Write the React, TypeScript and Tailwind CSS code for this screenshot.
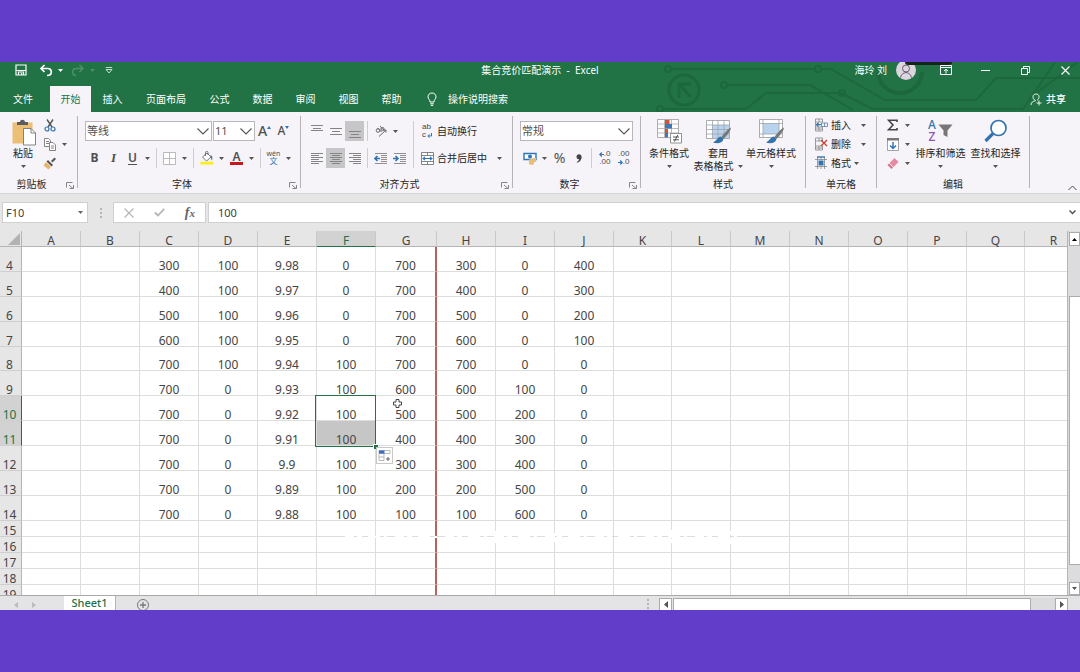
import React from 'react';
import { clsx } from 'clsx';

const TABS = ['插入', '页面布局', '公式', '数据', '审阅', '视图', '帮助'];

const COLUMNS = [
  { name: 'A', width: 59 },
  { name: 'B', width: 59 },
  { name: 'C', width: 59 },
  { name: 'D', width: 59 },
  { name: 'E', width: 59 },
  { name: 'F', width: 59 },
  { name: 'G', width: 61 },
  { name: 'H', width: 59 },
  { name: 'I', width: 59 },
  { name: 'J', width: 59 },
  { name: 'K', width: 58 },
  { name: 'L', width: 59 },
  { name: 'M', width: 59 },
  { name: 'N', width: 59 },
  { name: 'O', width: 59 },
  { name: 'P', width: 59 },
  { name: 'Q', width: 58 },
  { name: 'R', width: 58 },
];

// 行号 -> C 到 J 列的值
const DATA: Record<number, string[]> = {
  4: ['300', '100', '9.98', '0', '700', '300', '0', '400'],
  5: ['400', '100', '9.97', '0', '700', '400', '0', '300'],
  6: ['500', '100', '9.96', '0', '700', '500', '0', '200'],
  7: ['600', '100', '9.95', '0', '700', '600', '0', '100'],
  8: ['700', '100', '9.94', '100', '700', '700', '0', '0'],
  9: ['700', '0', '9.93', '100', '600', '600', '100', '0'],
  10: ['700', '0', '9.92', '100', '500', '500', '200', '0'],
  11: ['700', '0', '9.91', '100', '400', '400', '300', '0'],
  12: ['700', '0', '9.9', '100', '300', '300', '400', '0'],
  13: ['700', '0', '9.89', '100', '200', '200', '500', '0'],
  14: ['700', '0', '9.88', '100', '100', '100', '600', '0'],
};

const ROWS = Array.from({ length: 16 }, (_, i) => i + 4);

const Caret = ({ className = 'text-[#555]' }: { className?: string }) => (
  <svg viewBox="0 0 5 3" className={clsx('h-[3px] w-[5px] shrink-0', className)}>
    <path d="M0 0h5L2.5 3z" fill="currentColor" />
  </svg>
);

const CaretButton = ({ label }: { label: string }) => (
  <button aria-label={label} className="flex h-5 w-[11px] shrink-0 items-center justify-center">
    <Caret />
  </button>
);

const Sep = () => (
  <div className="flex h-5 w-[7px] shrink-0 justify-center">
    <div className="w-px bg-[#cfcdd2]" />
  </div>
);

const Tool = ({ label, active, children }: { label: string; active?: boolean; children: React.ReactNode }) => (
  <button
    aria-label={label}
    className={clsx('flex h-5 w-[19px] shrink-0 items-center justify-center text-[#505050]', active && 'bg-[#c6c5c8]')}
  >
    {children}
  </button>
);

const Chevron = () => (
  <svg viewBox="0 0 12 7" className="pointer-events-none absolute right-[3px] top-[7px] h-[7px] w-3" fill="none" stroke="#555" strokeWidth="1.1">
    <path d="M0.5 0.5L6 6L11.5 0.5" />
  </svg>
);

const Combo = ({ label, value, className }: { label: string; value: string; className: string }) => (
  <div className={clsx('relative h-5', className)}>
    <select
      aria-label={label}
      defaultValue={value}
      className="h-5 w-full appearance-none rounded-none border border-[#b9b7bb] bg-white pl-px text-[11px] leading-[14px] text-[#505050]"
    >
      <option>{value}</option>
    </select>
    <Chevron />
  </div>
);

const Group = ({ label, launcher, className, children }: { label: string; launcher?: boolean; className: string; children: React.ReactNode }) => (
  <>
    <section aria-label={label} className={clsx('flex h-[75px] shrink-0 flex-col', className)}>
      <div className="min-h-0 flex-1">{children}</div>
      <div className="flex h-[14px] items-center">
        <span className="flex-1 text-center">{label}</span>
        {launcher && (
          <button aria-label={`${label}设置`} className="flex w-[14px] items-end justify-center pt-px">
            <svg viewBox="0 0 8 8" className="h-2 w-2" fill="none" stroke="#777" strokeWidth="0.9">
              <path d="M0.5 6.5V1.5H6.5M3 4L7 7.5M7.5 4V7.5H3.5" />
            </svg>
          </button>
        )}
      </div>
    </section>
    <div className="h-[72px] w-px shrink-0 bg-[#b5b3b7]" />
  </>
);

const BigButton = ({ icon, lines, className }: { icon: React.ReactNode; lines: string[]; className: string }) => (
  <button className={clsx('flex shrink-0 flex-col items-center whitespace-nowrap pt-0.5', className)}>
    <span className="flex h-[26px] items-center">{icon}</span>
    <span className="mt-[3px] leading-[13px]">{lines[0]}</span>
    <span className="flex h-[13px] items-center gap-1 leading-[13px]">
      {lines[1]}
      <Caret />
    </span>
  </button>
);

const AlignIcon = ({ d }: { d: string }) => (
  <svg viewBox="0 0 12 13" className="h-[13px] w-3" fill="none" stroke="#858585" strokeWidth="1">
    <path d={d} />
  </svg>
);

const IndentIcon = ({ arrow }: { arrow: string }) => (
  <svg viewBox="0 0 13 13" className="h-[13px] w-[13px]" fill="none" stroke="#858585">
    <path d="M1 1.5H13M7 3.5H13M7 5.5H13M7 7.5H13M7 9.5H13M1 11.5H13" strokeWidth="0.9" />
    <path d={arrow} stroke="#2f74b5" strokeWidth="1.6" />
  </svg>
);

const ConditionalIcon = () => (
  <svg viewBox="0 0 26 26" className="h-[26px] w-[26px]">
    <path d="M1.5 1.5H22.5V19.5H1.5z" fill="#fff" stroke="#999" strokeWidth="0.8" />
    <path d="M1.5 6H22.5M1.5 10.5H22.5M1.5 15H22.5M8.5 1.5V19.5M15.5 1.5V19.5" stroke="#aaa" strokeWidth="0.8" fill="none" />
    <path d="M9 2H13.5V6H9zM9 11H12V15H9z" fill="#d2552f" />
    <path d="M9 6H16V10.5H9zM9 15H12V19.5H9z" fill="#3e78b5" />
    <path d="M14.5 15.5H25.5V25H14.5z" fill="#fff" stroke="#777" strokeWidth="0.8" />
    <path d="M17 19H23M17 21.8H23M21.8 17L18.4 23.6" stroke="#444" strokeWidth="0.9" />
  </svg>
);

const BrushOver = () => (
  <>
    <path d="M25.5 9.5C22 12 18.5 16 16.5 19L18.5 21C21.5 18 24.5 14 25.8 11z" fill="#777" />
    <path d="M16 18.5C13 18.5 12.5 22 8 24.5C12 26 17.5 25.5 18.5 21z" fill="#3474ae" />
  </>
);

const TableFormatIcon = () => (
  <svg viewBox="0 0 26 26" className="h-[26px] w-[26px]">
    <path d="M1.5 2.5H24.5V20.5H1.5z" fill="#fff" stroke="#999" strokeWidth="0.8" />
    <path d="M7.5 7H24V20H7.5z" fill="#b9d3ee" />
    <path d="M1.5 7H24.5M1.5 11.5H24.5M1.5 16H24.5M7.5 2.5V20.5M13 2.5V20.5M19 2.5V20.5" stroke="#9aa3ab" strokeWidth="0.8" fill="none" />
    <BrushOver />
  </svg>
);

const CellStyleIcon = () => (
  <svg viewBox="0 0 26 26" className="h-[26px] w-[26px]">
    <path d="M1.5 1.5H24.5V19.5H1.5z" fill="#fff" stroke="#999" strokeWidth="0.8" />
    <path d="M5 5.5H21V16H5z" fill="#b9d3ee" />
    <path d="M1.5 5.5H24.5M1.5 16H24.5M5 1.5V19.5M21 1.5V19.5" stroke="#9aa3ab" strokeWidth="0.8" fill="none" />
    <BrushOver />
  </svg>
);

const CellIcon = ({ kind }: { kind: 'insert' | 'delete' | 'format' }) => (
  <svg viewBox="0 0 14 14" className="h-[14px] w-[14px]" fill="none" strokeWidth="0.8">
    {kind === 'format' ? (
      <>
        <path d="M1 3.5H13M1 10.5H13M3.5 1V13M10.5 1V13M7 1V3M7 11V13" stroke="#858585" />
        <path d="M4.5 4.5H9.5V9.5H4.5z" fill="#3474ae" />
        <path d="M3 1H11" stroke="#3474ae" strokeWidth="1.4" />
      </>
    ) : (
      <>
        <path d="M1.5 1H8.5V4H1.5zM5 1V4M1.5 9H8.5V13H1.5zM1.5 11H8.5M5 9V13M1.5 4V9" stroke="#858585" />
        {kind === 'insert' ? (
          <>
            <path d="M7.5 5H13.5V8.5H7.5zM10.5 5V8.5" stroke="#5a7fa8" />
            <path d="M7 6.7H2.5M4.5 4.8L2.5 6.7L4.5 8.6" stroke="#3474ae" strokeWidth="1.3" />
          </>
        ) : (
          <path d="M7 3L13 9M13 3L7 9" stroke="#d03b2c" strokeWidth="1.3" />
        )}
      </>
    )}
  </svg>
);

const TitleBar = () => (
  <div className="relative mb-2 flex h-4 items-center">
    <div className="flex flex-1 items-center">
      <button aria-label="保存" className="ml-[15px] flex w-3 justify-center">
        <svg viewBox="0 0 12 12" className="h-3 w-3" fill="none" stroke="#fff" strokeWidth="1.2">
          <path d="M1 1H11V11H1zM1 6.5H11M3.5 11V8H8.5V11M6.5 9V11" />
        </svg>
      </button>
      <button aria-label="撤消" className="ml-3 flex w-[14px] justify-center">
        <svg viewBox="0 0 14 13" className="h-[13px] w-[14px]" fill="none" stroke="#fff" strokeWidth="1.7">
          <path d="M5.5 1L2 4.5L5.5 8M2 4.5H8.5C11 4.5 12.3 6 12.3 8C12.3 10 10.8 11.5 8 11.5" />
        </svg>
      </button>
      <button aria-label="撤消列表" className="ml-1 flex w-[6px] justify-center"><Caret className="text-white" /></button>
      <button aria-label="恢复" disabled className="ml-2 flex w-[14px] justify-center">
        <svg viewBox="0 0 14 13" className="h-[13px] w-[14px]" fill="none" stroke="#4d9169" strokeWidth="1.4">
          <path d="M8.5 1L12 4.5L8.5 8M12 4.5H5.5C3 4.5 1.7 6 1.7 8C1.7 10 3.2 11.5 5 11.5" />
        </svg>
      </button>
      <button aria-label="恢复列表" disabled className="ml-1 flex w-[6px] justify-center"><Caret className="text-[#4d9169]" /></button>
      <button aria-label="自定义快速访问工具栏" className="ml-[10px] flex w-2 justify-center">
        <svg viewBox="0 0 8 7" className="h-[7px] w-2" fill="none" stroke="#d5e6dc" strokeWidth="0.9">
          <path d="M0.8 0.5H7.2M1 2.5H7L4 6z" />
        </svg>
      </button>
    </div>
    <h1 className="whitespace-pre text-[10px]">集合竞价匹配演示  -  Excel</h1>
    <div className="flex flex-1 items-center justify-end">
      <span>海玲 刘</span>
      <button aria-label="账户" className="ml-[9px] flex h-5 w-5 items-end justify-center overflow-hidden rounded-full bg-[#dcd6de]">
        <svg viewBox="0 0 14 16" className="h-4 w-[14px]" fill="none" stroke="#6b5a70" strokeWidth="1">
          <circle cx="7" cy="4.5" r="3.5" />
          <path d="M1.5 15C1.5 6.5 12.5 6.5 12.5 15" />
        </svg>
      </button>
      <button aria-label="功能区显示选项" className="flex w-[59px] justify-center">
        <svg viewBox="0 0 12 10" className="h-[10px] w-3" fill="none" stroke="#fff" strokeWidth="1">
          <path d="M0.5 0.5H11.5V9.5H0.5zM0.5 2.5H11.5M6 8.5V4.5M4 6L6 4.2L8 6" />
        </svg>
      </button>
      <button aria-label="最小化" className="flex w-5 justify-center">
        <svg viewBox="0 0 9 9" className="h-[9px] w-[9px]" stroke="#fff"><path d="M0 4.5H9" /></svg>
      </button>
      <button aria-label="还原" className="ml-5 flex w-5 justify-center">
        <svg viewBox="0 0 9 9" className="h-[9px] w-[9px]" fill="none" stroke="#fff">
          <path d="M0.5 2.5H6.5V8.5H0.5zM2.5 2.5V0.5H8.5V6.5H6.5" />
        </svg>
      </button>
      <button aria-label="关闭" className="ml-5 mr-[5px] flex w-5 justify-center">
        <svg viewBox="0 0 9 9" className="h-[9px] w-[9px]" stroke="#fff" strokeWidth="1.1"><path d="M0.5 0.5L8.5 8.5M8.5 0.5L0.5 8.5" /></svg>
      </button>
    </div>
    <div className="absolute right-32 top-0 h-[3px] w-[47px] rounded-b-sm bg-[#14261c]" />
  </div>
);

const Circuit = () => (
  <svg viewBox="0 0 430 50" className="pointer-events-none absolute right-0 top-0 h-[50px] w-[430px]" fill="none" stroke="#1d673d" strokeWidth="2">
    <circle cx="18" cy="7" r="3" />
    <circle cx="168" cy="7" r="3" />
    <path d="M21 7H165M171 7H181L235 38H326L346 16H430" />
    <circle cx="34" cy="28" r="15" strokeWidth="3" />
    <path d="M29 36V22H41M29 22L41 35" strokeWidth="3" />
    <circle cx="74" cy="23" r="3" />
    <path d="M77 23H160L203 48" />
    <circle cx="10" cy="47" r="3" />
    <path d="M13 47H96L116 31H191L223 47H373L405 0M385 32L428 0" />
    <circle cx="192" cy="31" r="3" />
    <path d="M228 10C230 38 270 38 272 10" strokeWidth="4" />
  </svg>
);

const RibbonTabs = () => (
  <nav className="relative flex h-[26px] items-center text-[10px]">
    <button className="mr-1 h-full w-[46px]">文件</button>
    <button className="h-full w-[41px] bg-[#f6f4f8] text-[#217346]">开始</button>
    {TABS.map((tab) => (
      <button key={tab} className={clsx('h-full', tab.length > 2 ? 'w-16' : 'w-[43px]')}>
        {tab}
      </button>
    ))}
    <label htmlFor="tell-me" className="ml-[13px] flex w-3 justify-center">
      <svg viewBox="0 0 10 14" className="h-[14px] w-[10px]" fill="none" stroke="#fff" strokeWidth="1">
        <path d="M3 10C3 7.5 1 7 1 4.8C1 2.5 2.8 1 5 1C7.2 1 9 2.5 9 4.8C9 7 7 7.5 7 10zM3.2 11.8H6.8M3.8 13.4H6.2" />
      </svg>
    </label>
    <input id="tell-me" placeholder="操作说明搜索" className="ml-[10px] w-24 bg-transparent placeholder:text-white placeholder:opacity-100" />
    <button className="ml-auto mr-[14px] flex items-center gap-1 font-medium">
      <svg viewBox="0 0 12 13" className="h-[13px] w-3" fill="none" stroke="#fff" strokeWidth="0.9">
        <path d="M5.5 7.5C3.5 6.5 3 5 3 3.8C3 2 4.3 1 6 1C7.7 1 9 2 9 3.8C9 5 8.3 6.5 7 7.5M1 12C1 9.5 3 8 5.5 7.8M9 7.5V12.5M6.5 10H11.5" />
      </svg>
      共享
    </button>
  </nav>
);

const Ribbon = () => (
  <div className="relative flex border-b border-[#d3d2d5] bg-[#f6f4f8] pb-0.5 pt-1 text-[10px] leading-[14px] text-[#262626]">
    <Group label="剪贴板" launcher className="w-[77px]">
      <div className="flex">
        <button className="ml-[10px] flex w-[26px] flex-col items-center pt-[3px]">
          <svg viewBox="0 0 26 27" className="h-[27px] w-[26px]">
            <path d="M2.5 3.5H22.5V24.5H2.5z" fill="#ebbf76" />
            <path d="M7 6V3H10C10 0 15 0 15 3H18V6z" fill="#5c5c5f" />
            <path d="M13.5 9.5H21L25.5 14V26H13.5z" fill="#fff" stroke="#777" strokeWidth="0.9" />
            <path d="M21 9.5V14H25.5" fill="none" stroke="#777" strokeWidth="0.9" />
          </svg>
          <span className="mt-px leading-[13px]">粘贴</span>
          <span className="flex h-[13px] items-center"><Caret /></span>
        </button>
        <div className="flex w-[29px] flex-col gap-px pl-1">
          <button aria-label="剪切" className="flex h-[18px] w-[19px] items-center justify-center">
            <svg viewBox="0 0 12 13" className="h-[13px] w-3" fill="none">
              <path d="M3 0.5L8 8M9 0.5L4 8" stroke="#555" strokeWidth="1.4" />
              <circle cx="3" cy="10" r="2" stroke="#3474ae" strokeWidth="1.2" />
              <circle cx="9" cy="10" r="2" stroke="#3474ae" strokeWidth="1.2" />
            </svg>
          </button>
          <div className="flex h-[18px] items-center">
            <button aria-label="复制" className="flex w-[19px] shrink-0 justify-center">
              <svg viewBox="0 0 12 13" className="h-[13px] w-3" fill="#fff" stroke="#777" strokeWidth="0.9">
                <path d="M0.5 0.5H4.5L6.5 2.5V8.5H0.5zM2 3.5H5M2 5.5H5" />
                <path d="M5.5 4.5H9L11.5 7V12.5H5.5zM7 8H10M7 10H10" />
              </svg>
            </button>
            <CaretButton label="复制选项" />
          </div>
          <button aria-label="格式刷" className="flex h-[18px] w-[19px] items-center justify-center">
            <svg viewBox="0 0 13 13" className="h-[13px] w-[13px]">
              <path d="M8 4L11.5 0.5L13 2L9.5 5.5z" fill="#555" />
              <path d="M5 3L10 8L8.5 9.5L3.5 4.5z" fill="#5c5450" />
              <path d="M3 5L8 10L5.5 12.5L0.5 8.5z" fill="#e3b76d" />
            </svg>
          </button>
        </div>
      </div>
    </Group>

    <Group label="字体" launcher className="w-[222px]">
      <div className="flex flex-col gap-[7px] pl-[7px] pt-[5px]">
        <div className="flex">
          <Combo label="字体名称" value="等线" className="mr-px w-[127px]" />
          <Combo label="字号" value="11" className="w-[42px]" />
          <Tool label="增大字号">
            <span className="text-[14px] font-medium">A</span>
            <svg viewBox="0 0 4 3" className="mb-2 h-[3px] w-1"><path d="M0 3L2 0L4 3z" fill="#2f74b5" /></svg>
          </Tool>
          <Tool label="减小字号">
            <span className="text-[12px] font-medium">A</span>
            <svg viewBox="0 0 4 3" className="mb-2 h-[3px] w-1"><path d="M0 0H4L2 3z" fill="#2f74b5" /></svg>
          </Tool>
        </div>
        <div className="flex">
          <Tool label="加粗"><span className="text-[12px] font-bold">B</span></Tool>
          <Tool label="倾斜"><span className="font-['Liberation_Serif'] text-[13px] font-bold italic">I</span></Tool>
          <Tool label="下划线"><span className="text-[12px] font-semibold underline underline-offset-2">U</span></Tool>
          <CaretButton label="下划线选项" />
          <Sep />
          <Tool label="边框">
            <svg viewBox="0 0 13 13" className="h-[13px] w-[13px]" fill="#fff" stroke="#aaa" strokeWidth="0.8">
              <path d="M0.5 0.5H12.5V12.5H0.5zM6.5 0.5V12.5M0.5 6.5H12.5" />
            </svg>
          </Tool>
          <CaretButton label="边框选项" />
          <Sep />
          <Tool label="填充颜色">
            <svg viewBox="0 0 14 14" className="h-[14px] w-[14px]">
              <path d="M2.5 6L7 2L11 6L6.5 10z" fill="#fff" stroke="#666" strokeWidth="0.9" />
              <path d="M5.5 5V1.5C5.5 0 8 0 8 1.5V4" fill="none" stroke="#666" strokeWidth="0.9" />
              <path d="M10.5 4C13 5 12.5 8 12 9.5C11 8.5 11 6.5 10.5 4z" fill="#3474ae" />
              <path d="M0.5 10.8H13.5V13.6H0.5z" fill="#f7f01c" />
            </svg>
          </Tool>
          <CaretButton label="填充颜色选项" />
          <Tool label="字体颜色">
            <span className="flex flex-col items-center">
              <span className="text-[12px] font-semibold leading-[11px]">A</span>
              <span className="h-[3px] w-[13px] bg-[#c8161d]" />
            </span>
          </Tool>
          <CaretButton label="字体颜色选项" />
          <Sep />
          <Tool label="拼音">
            <span className="flex flex-col items-center">
              <span className="text-[7px] leading-[6px]">wén</span>
              <span className="text-[8px] leading-[8px] text-[#2f74b5]">文</span>
            </span>
          </Tool>
          <CaretButton label="拼音选项" />
        </div>
      </div>
    </Group>

    <Group label="对齐方式" launcher className="w-[211px]">
      <div className="flex pl-[6px] pt-[5px]">
        <div className="flex w-[102px] flex-col gap-[7px]">
          <div className="flex">
            <Tool label="顶端对齐"><AlignIcon d="M0 0.5H12M2 3.5H10M0 5.5H12" /></Tool>
            <Tool label="垂直居中"><AlignIcon d="M0 3.5H12M2 6.5H10M0 9.5H12" /></Tool>
            <Tool label="底端对齐" active><AlignIcon d="M0 6.5H12M2 9.5H10M0 12.5H12" /></Tool>
            <Sep />
            <Tool label="方向">
              <svg viewBox="0 0 12 12" className="h-3 w-3" fill="none" stroke="#666" strokeWidth="1">
                <circle cx="3" cy="5.5" r="1.8" />
                <path d="M2.5 3L6.5 7M5 1L9 5.5" />
                <circle cx="7.5" cy="4" r="1.6" />
                <path d="M4 11.5L11 5M8.5 5H11V7.5" />
              </svg>
            </Tool>
            <CaretButton label="方向选项" />
          </div>
          <div className="flex">
            <Tool label="左对齐"><AlignIcon d="M0 1.5H12M0 3.5H8M0 5.5H12M0 7.5H8M0 9.5H12M0 11.5H8" /></Tool>
            <Tool label="居中" active><AlignIcon d="M0 1.5H12M2 3.5H10M0 5.5H12M2 7.5H10M0 9.5H12M2 11.5H10" /></Tool>
            <Tool label="右对齐"><AlignIcon d="M0 1.5H12M4 3.5H12M0 5.5H12M4 7.5H12M0 9.5H12M4 11.5H12" /></Tool>
            <Sep />
            <Tool label="减少缩进量"><IndentIcon arrow="M6 6.5H1.5M3.5 4L1 6.5L3.5 9" /></Tool>
            <Tool label="增加缩进量"><IndentIcon arrow="M0 6.5H4.5M2.5 4L5 6.5L2.5 9" /></Tool>
          </div>
        </div>
        <div className="ml-1 mr-[3px] h-[47px] w-px bg-[#cfcdd2]" />
        <div className="flex flex-col gap-[7px]">
          <button className="flex h-5 items-center">
            <span className="flex w-5 flex-col items-start pl-[5px] font-['Liberation_Sans'] text-[8px] leading-[8px] text-[#444]">
              <span>ab</span>
              <span className="flex items-center gap-px">
                c
                <svg viewBox="0 0 5 5" className="h-[5px] w-[5px]" fill="none" stroke="#2f74b5" strokeWidth="1">
                  <path d="M4.5 0V3H1M2.5 1.2L0.8 3L2.5 4.8" />
                </svg>
              </span>
            </span>
            自动换行
          </button>
          <div className="flex">
            <button className="flex h-5 items-center">
              <span className="flex w-5 justify-center">
                <svg viewBox="0 0 13 13" className="h-[13px] w-[13px]" fill="#fff" stroke="#777" strokeWidth="0.9">
                  <path d="M0.5 0.5H12.5V12.5H0.5zM0.5 3.5H12.5M0.5 9.5H12.5M6.5 0.5V3.5M6.5 9.5V12.5" />
                  <path d="M2 6.5H11M4 4.8L2 6.5L4 8.2M9 4.8L11 6.5L9 8.2" fill="none" stroke="#2f74b5" strokeWidth="1.1" />
                </svg>
              </span>
              合并后居中
            </button>
            <span className="w-[7px]" />
            <CaretButton label="合并选项" />
          </div>
        </div>
      </div>
    </Group>

    <Group label="数字" launcher className="w-[127px]">
      <div className="flex flex-col gap-[7px] pl-[7px] pt-[5px]">
        <Combo label="数字格式" value="常规" className="w-[113px]" />
        <div className="flex">
          <Tool label="会计数字格式">
            <svg viewBox="0 0 14 13" className="h-[13px] w-[14px]">
              <path d="M1 1.5H13V7.5H1z" fill="#fff" stroke="#2f74b5" strokeWidth="1.4" />
              <circle cx="7" cy="4.5" r="2" fill="#2f74b5" />
              <path d="M6 8C6 6.8 11 6.8 11 8V12C11 13 6 13 6 12zM10 6H13V10H10z" fill="#e8bd77" />
            </svg>
          </Tool>
          <CaretButton label="货币选项" />
          <Tool label="百分比样式"><span className="text-[14px]">%</span></Tool>
          <Tool label="千位分隔样式">
            <svg viewBox="0 0 6 9" className="h-[9px] w-[6px]"><circle cx="3" cy="2.7" r="2.5" fill="#444" /><path d="M5.5 2.7C5.5 6 4 8 1 8.8L0.8 8C2.5 7 3.2 6 3.2 4z" fill="#444" /></svg>
          </Tool>
          <Sep />
          <Tool label="增加小数位数">
            <span className="flex flex-col items-end font-['Liberation_Sans'] text-[8px] leading-[8px]">
              <span className="flex items-center">
                <svg viewBox="0 0 5 5" className="h-[5px] w-[5px]" fill="none" stroke="#2f74b5" strokeWidth="1.2"><path d="M5 2.5H1M2.8 0.5L0.8 2.5L2.8 4.5" /></svg>
                .0
              </span>
              <span>.00</span>
            </span>
          </Tool>
          <Tool label="减少小数位数">
            <span className="flex flex-col items-end font-['Liberation_Sans'] text-[8px] leading-[8px]">
              <span>.00</span>
              <span className="flex items-center">
                <svg viewBox="0 0 5 5" className="h-[5px] w-[5px]" fill="none" stroke="#2f74b5" strokeWidth="1.2"><path d="M0 2.5H4M2.2 0.5L4.2 2.5L2.2 4.5" /></svg>
                .0
              </span>
            </span>
          </Tool>
        </div>
      </div>
    </Group>

    <Group label="样式" className="w-[164px]">
      <div className="flex pl-[3px]">
        <BigButton icon={<ConditionalIcon />} lines={['条件格式']} className="w-[50px]" />
        <BigButton icon={<TableFormatIcon />} lines={['套用', '表格格式']} className="w-12" />
        <BigButton icon={<CellStyleIcon />} lines={['单元格样式']} className="w-[58px]" />
      </div>
    </Group>

    <Group label="单元格" className="w-[70px]">
      <div className="flex flex-col gap-px pl-2">
        <button className="flex h-[18px] items-center"><CellIcon kind="insert" /><span className="ml-[3px] mr-[10px]">插入</span><Caret /></button>
        <button className="flex h-[18px] items-center"><CellIcon kind="delete" /><span className="ml-[3px] mr-[10px]">删除</span><Caret /></button>
        <button className="flex h-[18px] items-center"><CellIcon kind="format" /><span className="ml-[3px] mr-[3px]">格式</span><Caret /></button>
      </div>
    </Group>

    <Group label="编辑" className="w-[152px]">
      <div className="flex pl-[6px]">
        <div className="flex w-[30px] flex-col gap-px">
          <div className="flex h-[18px] items-center">
            <Tool label="自动求和">
              <svg viewBox="0 0 11 12" className="h-3 w-[11px]" fill="none" stroke="#444" strokeWidth="1.6">
                <path d="M10 3V1.2H1.5L6 6L1.5 10.8H10V9" />
              </svg>
            </Tool>
            <CaretButton label="求和选项" />
          </div>
          <div className="flex h-[18px] items-center">
            <Tool label="填充">
              <svg viewBox="0 0 12 13" className="h-[13px] w-3" fill="#fff">
                <path d="M0.5 0.5H11.5V12.5H0.5z" stroke="#999" strokeWidth="0.9" />
                <path d="M0 0H12V2.5H0z" fill="#777" />
                <path d="M6 4V10.5M3 7.5L6 10.5L9 7.5" fill="none" stroke="#2f74b5" strokeWidth="1.5" />
              </svg>
            </Tool>
            <CaretButton label="填充选项" />
          </div>
          <div className="flex h-[18px] items-center">
            <Tool label="清除">
              <svg viewBox="0 0 12 12" className="h-3 w-3">
                <path d="M7.5 1L11.5 5L6.5 10L2.5 6z" fill="#e58aa0" />
                <path d="M2 6.5L6 10.5L4.5 12L0.5 8z" fill="#d9708a" />
              </svg>
            </Tool>
            <CaretButton label="清除选项" />
          </div>
        </div>
        <BigButton
          className="w-[55px]"
          lines={['排序和筛选']}
          icon={
            <span className="flex items-center">
              <span className="flex flex-col text-[12px] font-medium leading-[12px]">
                <span className="text-[#3474ae]">A</span>
                <span className="text-[#8d54b5]">Z</span>
              </span>
              <svg viewBox="0 0 15 14" className="ml-0.5 h-[14px] w-[15px]"><path d="M0.5 0.5H14.5L9.5 6.5V13L5.5 11V6.5z" fill="#777" /></svg>
            </span>
          }
        />
        <BigButton
          className="w-[55px]"
          lines={['查找和选择']}
          icon={
            <svg viewBox="0 0 24 24" className="h-6 w-6" fill="none" stroke="#3474ae">
              <circle cx="14.5" cy="9" r="7.5" strokeWidth="1.7" fill="#fff" />
              <path d="M9 14.5L1.5 22" strokeWidth="3.2" />
            </svg>
          }
        />
      </div>
    </Group>

    <button aria-label="折叠功能区" className="ml-auto mr-[3px] flex items-end">
      <svg viewBox="0 0 9 6" className="h-[6px] w-[9px]" fill="none" stroke="#444" strokeWidth="1"><path d="M0.5 5L4.5 1L8.5 5" /></svg>
    </button>
  </div>
);

const Grip = ({ className }: { className: string }) => (
  <div className={clsx('flex flex-col items-center justify-center gap-0.5', className)}>
    <span className="h-0.5 w-0.5 bg-[#b5b5b5]" />
    <span className="h-0.5 w-0.5 bg-[#b5b5b5]" />
    <span className="h-0.5 w-0.5 bg-[#b5b5b5]" />
  </div>
);

const FormulaBar = () => (
  <div className="flex h-[37px] bg-[#e6e6e6] pl-0.5 pt-2 text-[11px] text-[#404040]">
    <div className="relative h-[21px] w-[86px]">
      <input aria-label="名称框" defaultValue="F10" className="h-[21px] w-full border border-[#d0d0d0] bg-white pl-[3px]" />
      <Caret className="absolute right-[5px] top-[9px] text-[#666]" />
    </div>
    <Grip className="h-[21px] w-[25px]" />
    <div className="flex h-[21px] w-[93px] items-center justify-around border border-[#d0d0d0] bg-white">
      <button aria-label="取消">
        <svg viewBox="0 0 10 10" className="h-[10px] w-[10px]" stroke="#b5b5b5" strokeWidth="1.2"><path d="M0.5 0.5L9.5 9.5M9.5 0.5L0.5 9.5" /></svg>
      </button>
      <button aria-label="输入">
        <svg viewBox="0 0 11 9" className="h-[9px] w-[11px]" fill="none" stroke="#b5b5b5" strokeWidth="1.8"><path d="M0.8 4.5L4 7.5L10.2 0.8" /></svg>
      </button>
      <button aria-label="插入函数" className="font-['Liberation_Serif'] text-[14px] font-bold italic leading-[14px] text-[#666]">
        f<span className="text-[11px]">x</span>
      </button>
    </div>
    <div className="relative ml-0.5 h-[21px] flex-1">
      <input aria-label="编辑栏" defaultValue="100" className="h-[21px] w-full border border-r-0 border-[#d0d0d0] bg-white pl-[9px]" />
      <svg viewBox="0 0 7 5" className="absolute right-1 top-2 h-[5px] w-[7px]" fill="none" stroke="#555" strokeWidth="1.5"><path d="M0.5 0.5L3.5 3.5L6.5 0.5" /></svg>
    </div>
  </div>
);

const SelectionBox = () => (
  <div className="pointer-events-none absolute left-[315px] top-[164px] h-[52px] w-[61px] border border-[#217346]">
    <div className="absolute -bottom-[3px] -right-[3px] h-[5px] w-[5px] border-l border-t border-white bg-[#217346]" />
    <div className="absolute left-[60px] top-[51px] flex h-[17px] w-[17px] items-center justify-center border border-[#c8c8c8] bg-white">
      <svg viewBox="0 0 13 13" className="h-[13px] w-[13px]" fill="none" stroke="#aaa" strokeWidth="0.8">
        <path d="M1 1.5H12V4.500H1zM1 4.5H6V11.5H1zM1 8H6" />
        <path d="M1 1.5H6.5V4.5H1z" fill="#3a6cc8" stroke="none" />
        <path d="M10 8V12M8 10H12" stroke="#666" strokeWidth="1" />
      </svg>
    </div>
    <svg viewBox="0 0 9 9" className="absolute left-[77px] top-[3px] h-[9px] w-[9px]" fill="#fff" stroke="#444" strokeWidth="1">
      <path d="M3 0.5H6V3H8.5V6H6V8.5H3V6H0.5V3H3z" />
    </svg>
  </div>
);

const rowHeight = (row: number) => {
  if (row > 14) return 'h-4';
  return row === 8 ? 'h-6' : 'h-[25px]';
};

const Grid = () => (
  <div className="relative min-w-0 flex-1 overflow-hidden border-r border-[#b5b5b5] bg-white">
    <table className="w-[1083px] table-fixed border-separate border-spacing-0 text-[12px] leading-[11px] text-[#454545]">
      <colgroup>
        <col style={{ width: 22 }} />
        {COLUMNS.map((col) => (
          <col key={col.name} style={{ width: col.width }} />
        ))}
      </colgroup>
      <thead>
        <tr className="h-4">
          <th className="border-b border-r border-[#b5b5b5] bg-[#e6e6e6] p-0">
            <svg viewBox="0 0 12 12" className="ml-auto mr-px h-3 w-3"><path d="M12 0V12H0z" fill="#b2b2b2" /></svg>
          </th>
          {COLUMNS.map((col) => (
            <th
              key={col.name}
              className={clsx(
                'border-b border-r border-r-[#c9c9c9] p-0 text-center align-bottom font-normal',
                col.name === 'F' ? 'border-b-[#217346] bg-[#d2d2d2] text-[#217346]' : 'border-b-[#b5b5b5] bg-[#e6e6e6]'
              )}
            >
              {col.name}
            </th>
          ))}
        </tr>
      </thead>
      <tbody>
        {ROWS.map((row) => {
          const picked = row === 10 || row === 11;
          return (
            <tr key={row} className={rowHeight(row)}>
              <th
                className={clsx(
                  'border-b border-r border-b-[#cfcfcf] p-0 pr-0.5 text-center align-bottom font-normal',
                  picked ? 'border-r-[#217346] bg-[#d2d2d2] text-[#217346]' : 'border-r-[#b5b5b5] bg-[#e6e6e6]'
                )}
              >
                {row}
              </th>
              {COLUMNS.map((col, i) => (
                <td
                  key={col.name}
                  className={clsx(
                    'border-b border-b-[#dcdedc] p-0 text-center align-bottom',
                    col.name === 'G' ? 'border-r-2 border-r-[#b8615f]' : 'border-r border-r-[#dcdedc]',
                    row === 11 && col.name === 'F' && 'bg-[#c6c6c6]'
                  )}
                >
                  {DATA[row]?.[i - 2]}
                </td>
              ))}
            </tr>
          );
        })}
      </tbody>
    </table>
    <SelectionBox />
    <svg viewBox="0 0 400 14" className="pointer-events-none absolute left-[345px] top-[299px] h-[14px] w-[400px]" stroke="#fff" fill="none">
      <path d="M0 7H400" strokeWidth="2" strokeDasharray="9 3 5 6 12 4 3 8" />
      <path d="M150 1V13M209 3V12M327 0V6M327 9V13M386 1V5M386 8V14" strokeWidth="2" />
    </svg>
  </div>
);

const VerticalScroll = () => (
  <div className="flex w-3 shrink-0 flex-col bg-[#dcdbdd] pl-px">
    <button aria-label="向上滚动" className="mt-px flex h-[14px] items-center justify-center border border-[#ababab] bg-white">
      <Caret className="rotate-180" />
    </button>
    <div className="mt-[50px] flex-1 border border-r-0 border-[#ababab] bg-white" />
    <button aria-label="向下滚动" className="mt-[17px] flex h-[13px] items-center justify-center border border-[#ababab] bg-white">
      <Caret />
    </button>
  </div>
);

const SheetBar = () => (
  <div className="flex h-[15px] shrink-0 overflow-hidden border-t border-[#a9a9a9] bg-[#e4e4e6]">
    <div className="flex w-16 items-center gap-[14px] pl-[14px] pt-1">
      <button aria-label="上一张工作表"><svg viewBox="0 0 4 6" className="h-[6px] w-1"><path d="M4 0V6L0 3z" fill="#bbb" /></svg></button>
      <button aria-label="下一张工作表"><svg viewBox="0 0 4 6" className="h-[6px] w-1"><path d="M0 0V6L4 3z" fill="#bbb" /></svg></button>
    </div>
    <button className="w-[52px] border-r border-[#b5b5b5] bg-white text-[11px] font-medium leading-[14px] text-[#217346]">Sheet1</button>
    <button aria-label="新工作表" className="ml-[21px] mt-[3px] h-3 w-3">
      <svg viewBox="0 0 12 12" className="h-3 w-3" fill="none" stroke="#777" strokeWidth="1">
        <circle cx="6" cy="6" r="5.5" />
        <path d="M6 3V9M3 6H9" strokeWidth="1.3" />
      </svg>
    </button>
    <div className="ml-auto flex w-[444px] pt-[2px]">
      <Grip className="w-[23px]" />
      <button aria-label="向左滚动" className="flex w-[13px] items-center justify-center border border-b-0 border-[#ababab] bg-white">
        <svg viewBox="0 0 4 7" className="h-[7px] w-1"><path d="M4 0V7L0 3.5z" fill="#555" /></svg>
      </button>
      <div className="ml-px flex-1 border border-b-0 border-[#ababab] bg-white" />
      <div className="w-6 bg-[#dcdbdd]" />
      <button aria-label="向右滚动" className="mr-3 flex w-[13px] items-center justify-center border border-b-0 border-[#ababab] bg-white">
        <svg viewBox="0 0 4 7" className="h-[7px] w-1"><path d="M0 0V7L4 3.5z" fill="#555" /></svg>
      </button>
    </div>
  </div>
);

const App: React.FC = () => {
  return (
    <div className="flex h-screen flex-col overflow-hidden bg-[#623dc9] py-[62px] font-['Noto_Sans','Noto_Sans_CJK_SC',sans-serif]">
      <header className="relative shrink-0 overflow-hidden bg-[#217346] text-[10px] leading-[14px] text-white">
        <Circuit />
        <TitleBar />
        <RibbonTabs />
      </header>
      <Ribbon />
      <FormulaBar />
      <main className="flex min-h-0 flex-1 bg-[#e6e6e6]">
        <Grid />
        <VerticalScroll />
      </main>
      <SheetBar />
    </div>
  );
};

export default App;
